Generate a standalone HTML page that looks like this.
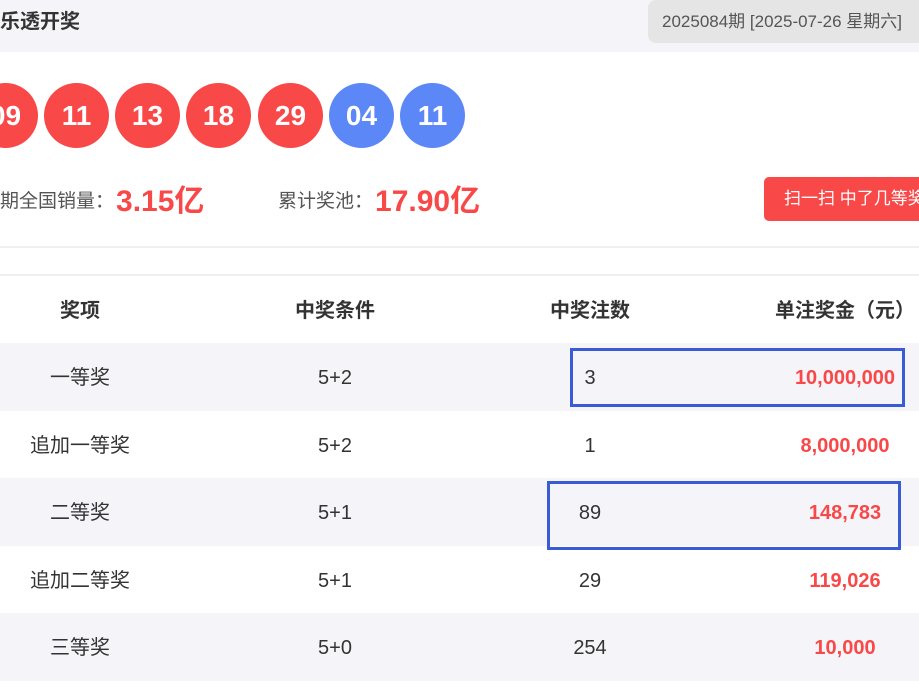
<!DOCTYPE html>
<html><head><meta charset="utf-8"><style>
*{margin:0;padding:0;box-sizing:border-box}
body{width:919px;height:695px;overflow:hidden;background:#fff;font-family:"Liberation Sans","Noto Sans CJK SC",sans-serif;color:#333;position:relative}
.hdr{position:absolute;left:0;top:0;width:919px;height:52px;background:#f5f5f9}
.title{position:absolute;left:-20px;top:0;line-height:44px;font-size:20px;font-weight:bold;color:#333;white-space:nowrap}
.date{position:absolute;left:648px;top:0;width:290px;height:43px;background:#e5e5e5;border-radius:8px;font-size:17px;color:#555;line-height:43px;padding-left:14px;white-space:nowrap}
.ball{position:absolute;top:83px;width:65px;height:65px;border-radius:50%;color:#fff;font-weight:bold;font-size:28px;text-align:center;line-height:65px;background:#f84848}
.blue{background:#5c87f6}
.st{position:absolute;top:182px;height:40px;line-height:40px;font-size:19px;color:#555;white-space:nowrap}
.st b{color:#f84848;font-size:30px;margin-left:2px;vertical-align:top}
.btn{position:absolute;left:764px;top:177px;width:170px;height:44px;background:#f84848;border-radius:5px;color:#fff;font-size:17px;line-height:44px;padding-left:20px;white-space:nowrap}
.l1{position:absolute;left:0;top:246px;width:919px;height:2px;background:#efefef}
.l2{position:absolute;left:0;top:274px;width:919px;height:2px;background:#efefef}
.row{position:absolute;left:0;width:919px;height:68px;font-size:20px}
.g{background:#f5f5f9}
.row div{position:absolute;top:1px;line-height:68px;text-align:center;white-space:nowrap}
.c1{left:0;width:160px}.c2{left:255px;width:160px}.c3{left:510px;width:160px}.c4{left:765px;width:160px;color:#f84848;font-weight:bold}
.h div{font-weight:bold;color:#333}
.h .c4{color:#333}
.box{position:absolute;border:3px solid #3a5bd6}
</style></head><body>
<div class="hdr"><div class="title">大乐透开奖</div><div class="date">2025084期 [2025-07-26 星期六]</div></div>
<div class="ball" style="left:-27px">09</div>
<div class="ball" style="left:44px">11</div>
<div class="ball" style="left:115px">13</div>
<div class="ball" style="left:186px">18</div>
<div class="ball" style="left:258px">29</div>
<div class="ball blue" style="left:329px">04</div>
<div class="ball blue" style="left:400px">11</div>
<div class="st" style="left:-19px">本期全国销量：<b>3.15亿</b></div>
<div class="st" style="left:278px">累计奖池：<b>17.90亿</b></div>
<div class="btn">扫一扫 中了几等奖</div>
<div class="l1"></div><div class="l2"></div>
<div class="row h" style="top:276px"><div class="c1">奖项</div><div class="c2">中奖条件</div><div class="c3">中奖注数</div><div class="c4">单注奖金（元）</div></div>
<div class="row g" style="top:343px"><div class="c1">一等奖</div><div class="c2">5+2</div><div class="c3">3</div><div class="c4">10,000,000</div></div>
<div class="row" style="top:411px"><div class="c1">追加一等奖</div><div class="c2">5+2</div><div class="c3">1</div><div class="c4">8,000,000</div></div>
<div class="row g" style="top:478px"><div class="c1">二等奖</div><div class="c2">5+1</div><div class="c3">89</div><div class="c4">148,783</div></div>
<div class="row" style="top:546px"><div class="c1">追加二等奖</div><div class="c2">5+1</div><div class="c3">29</div><div class="c4">119,026</div></div>
<div class="row g" style="top:613px"><div class="c1">三等奖</div><div class="c2">5+0</div><div class="c3">254</div><div class="c4">10,000</div></div>
<div class="box" style="left:570px;top:348px;width:335px;height:59px"></div>
<div class="box" style="left:547px;top:481px;width:354px;height:69px"></div>
</body></html>
